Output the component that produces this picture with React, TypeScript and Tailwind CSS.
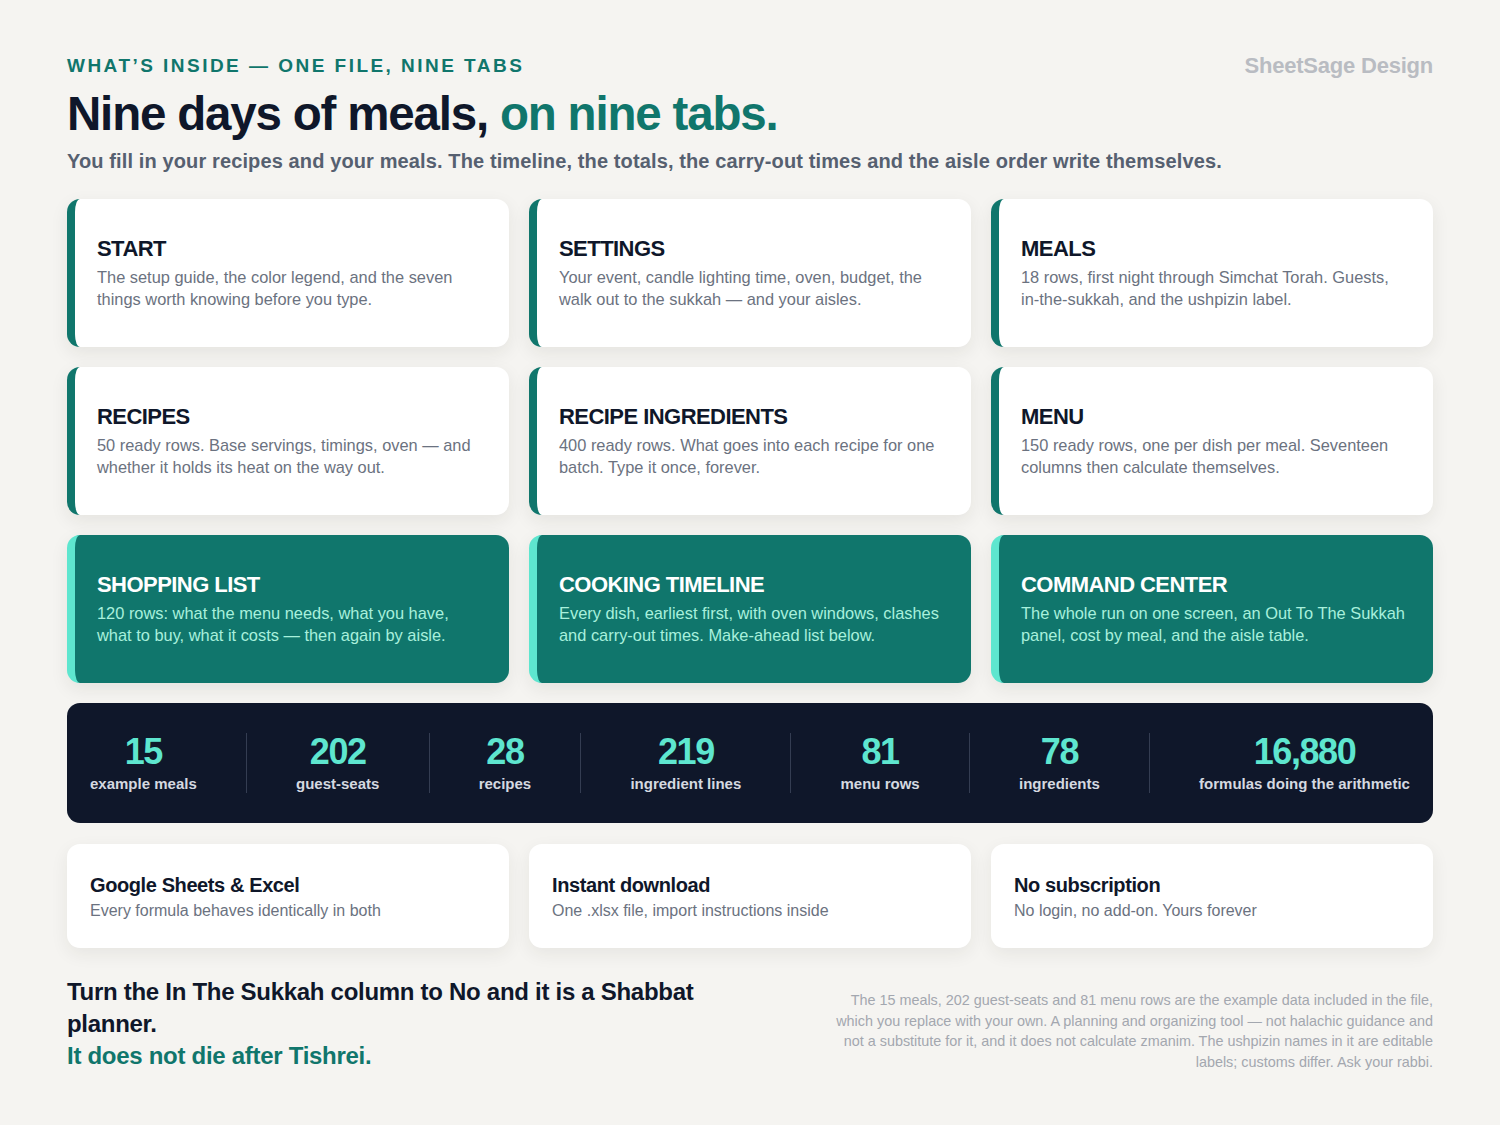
const tabs = [
  {
    title: "START",
    body: "The setup guide, the color legend, and the seven things worth knowing before you type.",
    dark: false,
  },
  {
    title: "SETTINGS",
    body: "Your event, candle lighting time, oven, budget, the walk out to the sukkah — and your aisles.",
    dark: false,
  },
  {
    title: "MEALS",
    body: "18 rows, first night through Simchat Torah. Guests, in-the-sukkah, and the ushpizin label.",
    dark: false,
  },
  {
    title: "RECIPES",
    body: "50 ready rows. Base servings, timings, oven — and whether it holds its heat on the way out.",
    dark: false,
  },
  {
    title: "RECIPE INGREDIENTS",
    body: "400 ready rows. What goes into each recipe for one batch. Type it once, forever.",
    dark: false,
  },
  {
    title: "MENU",
    body: "150 ready rows, one per dish per meal. Seventeen columns then calculate themselves.",
    dark: false,
  },
  {
    title: "SHOPPING LIST",
    body: "120 rows: what the menu needs, what you have, what to buy, what it costs — then again by aisle.",
    dark: true,
  },
  {
    title: "COOKING TIMELINE",
    body: "Every dish, earliest first, with oven windows, clashes and carry-out times. Make-ahead list below.",
    dark: true,
  },
  {
    title: "COMMAND CENTER",
    body: "The whole run on one screen, an Out To The Sukkah panel, cost by meal, and the aisle table.",
    dark: true,
  },
];

const stats = [
  { value: "15", label: "example meals" },
  { value: "202", label: "guest-seats" },
  { value: "28", label: "recipes" },
  { value: "219", label: "ingredient lines" },
  { value: "81", label: "menu rows" },
  { value: "78", label: "ingredients" },
  { value: "16,880", label: "formulas doing the arithmetic" },
];

const perks = [
  { title: "Google Sheets & Excel", body: "Every formula behaves identically in both" },
  { title: "Instant download", body: "One .xlsx file, import instructions inside" },
  { title: "No subscription", body: "No login, no add-on. Yours forever" },
];

const TabCard = ({ title, body, dark }: { title: string; body: string; dark: boolean }) => {
  return (
    <div
      className={
        dark
          ? "h-[148px] rounded-[13px] border-l-8 border-[#5ee6cf] bg-[#10766c] pl-[22px] pr-6 pt-[37px] shadow-[0_6px_18px_rgba(40,40,30,0.08)]"
          : "h-[148px] rounded-[13px] border-l-8 border-[#10766c] bg-white pl-[22px] pr-6 pt-[37px] shadow-[0_6px_18px_rgba(40,40,30,0.08)]"
      }
    >
      <h3 className={dark ? "text-[22px] font-bold leading-[26px] tracking-[-0.025em] text-white" : "text-[22px] font-bold leading-[26px] tracking-[-0.025em] text-[#0f172a]"}>
        {title}
      </h3>
      <p className={dark ? "mt-[4px] text-[16.4px] leading-[22px] text-[#a8f0dc]" : "mt-[4px] text-[16.4px] leading-[22px] text-[#6b7280]"}>
        {body}
      </p>
    </div>
  );
};

const App: React.FC = () => {
  return (
    <div className="min-h-[1125px] bg-[#f5f4f1] px-[67px] pt-[54px] pb-10 font-['Liberation_Sans',Arial,sans-serif]">
      <div className="flex items-start justify-between">
        <p className="text-[19px] font-bold leading-[24px] tracking-[0.13em] text-[#10766c]">WHAT’S INSIDE — ONE FILE, NINE TABS</p>
        <p className="text-[22px] font-bold leading-[24px] tracking-[-0.01em] text-[#b9bcc2]">SheetSage Design</p>
      </div>

      <h1 className="mt-[10px] text-[47.5px] font-bold leading-[52px] tracking-[-0.025em] text-[#0f172a]">
        Nine days of meals, <span className="text-[#10766c]">on nine tabs.</span>
      </h1>
      <p className="mt-[7px] text-[20px] font-bold leading-[28px] tracking-[0.006em] text-[#566070]">
        You fill in your recipes and your meals. The timeline, the totals, the carry-out times and the aisle order write themselves.
      </p>

      <div className="mt-[24px] grid grid-cols-3 gap-5">
        {tabs.map((t) => (
          <TabCard key={t.title} title={t.title} body={t.body} dark={t.dark} />
        ))}
      </div>

      <div className="mt-5 flex h-[120px] items-center justify-between rounded-[13px] bg-[#0f172a] px-[23px]">
        {stats.map((s, i) => (
          <div key={s.label} className="contents">
            {i > 0 && <div className="h-[60px] w-px bg-[#343d52]" />}
            <div className="flex flex-col items-center">
              <span className="text-[36px] font-bold leading-[40px] tracking-[-0.04em] text-[#5ee6cf]">{s.value}</span>
              <span className="mt-[2px] text-[15px] font-bold leading-[20px] text-[#d5d9e0]">{s.label}</span>
            </div>
          </div>
        ))}
      </div>

      <div className="mt-[21px] grid grid-cols-3 gap-5">
        {perks.map((p) => (
          <div key={p.title} className="h-[104px] rounded-[13px] bg-white px-[23px] pt-[29px] shadow-[0_6px_18px_rgba(40,40,30,0.07)]">
            <h4 className="text-[20px] font-bold leading-[24px] tracking-[-0.02em] text-[#0f172a]">{p.title}</h4>
            <p className="mt-1 text-[16px] leading-[20px] text-[#6b7280]">{p.body}</p>
          </div>
        ))}
      </div>

      <div className="mt-[28px] flex items-start justify-between">
        <div className="w-[680px] text-[24px] font-bold leading-[32px] tracking-[-0.012em]">
          <p className="text-[#0f172a]">Turn the In The Sukkah column to No and it is a Shabbat planner.</p>
          <p className="text-[#10766c]">It does not die after Tishrei.</p>
        </div>
        <p className="mt-[14px] w-[603px] text-right text-[14.4px] leading-[20.5px] text-[#a3a7af]">
          The 15 meals, 202 guest-seats and 81 menu rows are the example data included in the file, which you replace with your own. A planning and organizing tool — not halachic guidance and not a substitute for it, and it does not calculate zmanim. The ushpizin names in it are editable labels; customs differ. Ask your rabbi.
        </p>
      </div>
    </div>
  );
};

export default App;
